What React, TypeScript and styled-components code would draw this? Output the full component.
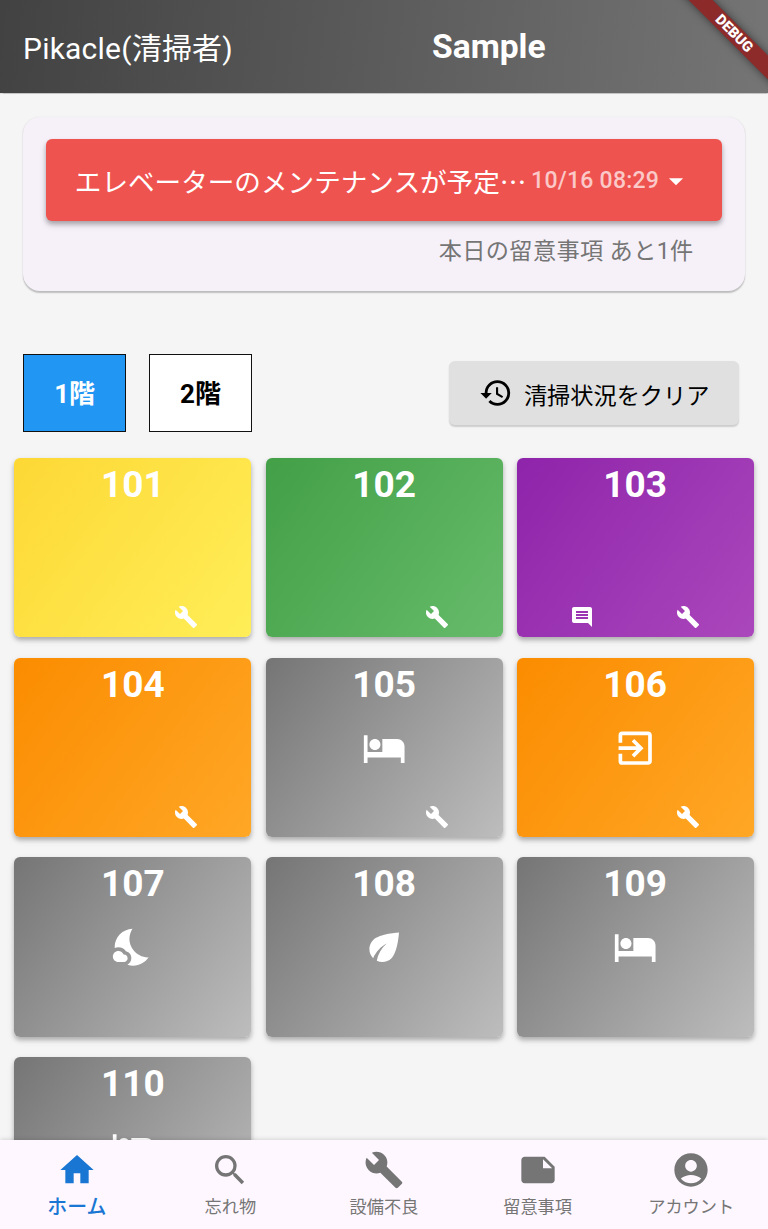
import React from 'react';
import styled, { createGlobalStyle, css } from 'styled-components';
import {
  MdAccountCircle,
  MdArrowDropDown,
  MdBuild,
  MdComment,
  MdEco,
  MdExitToApp,
  MdHistory,
  MdHome,
  MdHotel,
  MdNightsStay,
  MdNote,
  MdSearch,
} from 'react-icons/md';
import type { IconType } from 'react-icons';

const GlobalStyle = createGlobalStyle`
  *, *::before, *::after { box-sizing: border-box; }
  body {
    margin: 0;
    font-family: Roboto, "Noto Sans CJK JP", sans-serif;
    background: #f5f5f5;
  }
  button {
    font: inherit;
    border: 0;
    padding: 0;
    cursor: pointer;
  }
  svg { display: block; flex: none; }
`;

const Screen = styled.div`
  position: relative;
  display: flex;
  flex-direction: column;
  width: 768px;
  height: 1229px;
  overflow: hidden;
  background: #f5f5f5;
`;

const Header = styled.header`
  display: flex;
  align-items: center;
  flex: none;
  height: 93.3px;
  padding-left: 23px;
  color: #fff;
  background: linear-gradient(96.9deg, #424242, #757575);
  box-shadow: 0 0.5px 1px rgba(0, 0, 0, 0.2);
`;

const AppName = styled.div`
  width: 409px;
  padding-top: 4.4px;
  font-size: 30px;
  line-height: 40px;
  letter-spacing: 0.22px;
  white-space: nowrap;
`;

const FacilityName = styled.h1`
  margin: 0;
  font-size: 33.6px;
  line-height: 40px;
  font-weight: 700;
`;

const DebugRibbon = styled.div`
  position: absolute;
  top: 25px;
  left: 633.7px;
  width: 200px;
  height: 17.4px;
  transform: rotate(45deg);
  background: linear-gradient(rgba(183, 28, 28, 0.63), rgba(183, 28, 28, 0.63)), rgba(0, 0, 0, 0.4);
  box-shadow: 0 0 9px rgba(0, 0, 0, 0.5);
  color: #fff;
  font-size: 14.5px;
  line-height: 17.4px;
  font-weight: 900;
  text-align: center;
`;

const Content = styled.main`
  flex: 1;
  min-height: 0;
  overflow: hidden;
`;

const NoticePanel = styled.section`
  height: 174px;
  margin: 23.7px 22.8px 0;
  padding: 22.4px 23px 0;
  border-radius: 17px;
  background: #f6f1f9;
  box-shadow: 0 1.4px 1.5px rgba(0, 0, 0, 0.22), 0 0 2px rgba(0, 0, 0, 0.06);
`;

const NoticeButton = styled.button`
  display: flex;
  align-items: center;
  width: 100%;
  height: 81.3px;
  padding: 1px 29px 0 29px;
  border-radius: 6px;
  color: #fff;
  background: #ef5350;
  box-shadow: 0 3px 4px rgba(0, 0, 0, 0.22), 0 4px 7px rgba(0, 0, 0, 0.14);
`;

const NoticeText = styled.span`
  flex: 1;
  text-align: left;
  font-family: "Noto Sans CJK JP", sans-serif;
  font-size: 26.6px;
  line-height: 38px;
  white-space: nowrap;
`;

const NoticeDate = styled.span`
  color: rgba(255, 255, 255, 0.7);
  font-size: 23px;
  font-weight: 500;
  letter-spacing: 0.25px;
  white-space: nowrap;
`;

const NoticeRemaining = styled.p`
  margin: 13.5px 28.6px 0 0;
  color: #757575;
  font-size: 23.2px;
  line-height: 34px;
  letter-spacing: 0.35px;
  text-align: right;
`;

const Controls = styled.div`
  display: flex;
  align-items: center;
  margin-top: 63.1px;
  padding: 0 28.6px 0 23px;
  height: 78px;
`;

const FloorTab = styled.button<{ $active?: boolean }>`
  width: 103.3px;
  height: 78px;
  margin-right: 22.5px;
  padding-bottom: 3px;
  border: 1.4px solid #111;
  font-size: 26px;
  font-weight: 700;
  color: ${({ $active }) => ($active ? '#fff' : '#000')};
  background: ${({ $active }) => ($active ? '#2196f3' : '#fff')};
`;

const ClearButton = styled.button`
  display: flex;
  align-items: center;
  gap: 11.3px;
  width: 290px;
  height: 64px;
  margin-left: auto;
  padding-left: 29.2px;
  border-radius: 6px;
  font-size: 23.2px;
  color: #000;
  background: #e0e0e0;
  box-shadow: 0 1.5px 1.5px rgba(0, 0, 0, 0.16);
  white-space: nowrap;
`;

const ClearLabel = styled.span`
  padding-top: 2px;
`;

const RoomGrid = styled.div`
  display: grid;
  grid-template-columns: repeat(3, 237.05px);
  grid-auto-rows: 179.3px;
  gap: 20.3px 14.1px;
  padding: 26px 0 0 14.4px;
`;

const tones = {
  yellow: ['#fdd835', '#ffee58'],
  green: ['#43a047', '#66bb6a'],
  purple: ['#8e24aa', '#ab47bc'],
  orange: ['#fb8c00', '#ffa726'],
  grey: ['#757575', '#bdbdbd'],
};

type Tone = keyof typeof tones;

const RoomCard = styled.article<{ $tone: Tone }>`
  display: grid;
  grid-template-rows: 54px 1fr 53.2px;
  justify-items: center;
  align-items: center;
  border-radius: 6px;
  color: #fff;
  box-shadow: 0 3px 4px rgba(0, 0, 0, 0.2), 0 3px 7px rgba(0, 0, 0, 0.13);
  ${({ $tone }) => css`
    background: linear-gradient(127deg, ${tones[$tone][0]}, ${tones[$tone][1]});
  `}
`;

const RoomNumber = styled.h2`
  margin: 0;
  font-size: 37px;
  line-height: 54px;
  font-weight: 700;
`;

const RoomFlags = styled.div`
  display: grid;
  grid-template-columns: 106.6px 106.6px;
  justify-items: center;
  align-self: end;
  height: 32px;
`;

const BottomNav = styled.nav`
  position: relative;
  display: grid;
  grid-template-columns: repeat(5, 1fr);
  flex: none;
  height: 89.5px;
  background: #fef7ff;
  box-shadow: 0 0 5px rgba(0, 0, 0, 0.18);
`;

const NavItem = styled.button<{ $active?: boolean }>`
  display: flex;
  flex-direction: column;
  align-items: center;
  justify-content: flex-start;
  padding-top: 10.6px;
  background: none;
  color: ${({ $active }) => ($active ? '#1976d2' : '#757575')};
`;

const NavLabel = styled.span<{ $active?: boolean }>`
  margin-top: ${({ $active }) => ($active ? '4px' : '3px')};
  font-size: ${({ $active }) => ($active ? '19.9px' : '17.2px')};
  font-weight: ${({ $active }) => ($active ? 500 : 400)};
  line-height: 28px;
  white-space: nowrap;
`;

type Room = {
  number: string;
  tone: Tone;
  Status?: IconType;
  comment?: boolean;
  repair?: boolean;
};

const rooms: Room[] = [
  { number: '101', tone: 'yellow', repair: true },
  { number: '102', tone: 'green', repair: true },
  { number: '103', tone: 'purple', comment: true, repair: true },
  { number: '104', tone: 'orange', repair: true },
  { number: '105', tone: 'grey', Status: MdHotel, repair: true },
  { number: '106', tone: 'orange', Status: MdExitToApp, repair: true },
  { number: '107', tone: 'grey', Status: MdNightsStay },
  { number: '108', tone: 'grey', Status: MdEco },
  { number: '109', tone: 'grey', Status: MdHotel },
  { number: '110', tone: 'grey', Status: MdHotel },
];

const navItems: { label: string; Icon: IconType; active?: boolean }[] = [
  { label: 'ホーム', Icon: MdHome, active: true },
  { label: '忘れ物', Icon: MdSearch },
  { label: '設備不良', Icon: MdBuild },
  { label: '留意事項', Icon: MdNote },
  { label: 'アカウント', Icon: MdAccountCircle },
];

export default function App() {
  return (
    <Screen lang="ja">
      <GlobalStyle />
      <Header>
        <AppName>Pikacle(清掃者)</AppName>
        <FacilityName>Sample</FacilityName>
      </Header>
      <Content>
        <NoticePanel>
          <NoticeButton>
            <NoticeText>エレベーターのメンテナンスが予定…</NoticeText>
            <NoticeDate>10/16 08:29</NoticeDate>
            <MdArrowDropDown size={34} />
          </NoticeButton>
          <NoticeRemaining>本日の留意事項 あと1件</NoticeRemaining>
        </NoticePanel>
        <Controls>
          <FloorTab $active>1階</FloorTab>
          <FloorTab>2階</FloorTab>
          <ClearButton>
            <MdHistory size={34} />
            <ClearLabel>清掃状況をクリア</ClearLabel>
          </ClearButton>
        </Controls>
        <RoomGrid>
          {rooms.map(({ number, tone, Status, comment, repair }) => (
            <RoomCard key={number} $tone={tone}>
              <RoomNumber>{number}</RoomNumber>
              <div>{Status && <Status size={44.4} />}</div>
              <RoomFlags>
                <div>{comment && <MdComment size={24} />}</div>
                <div>{repair && <MdBuild size={24} />}</div>
              </RoomFlags>
            </RoomCard>
          ))}
        </RoomGrid>
      </Content>
      <BottomNav>
        {navItems.map(({ label, Icon, active }) => (
          <NavItem key={label} $active={active}>
            <Icon size={40} />
            <NavLabel $active={active}>{label}</NavLabel>
          </NavItem>
        ))}
      </BottomNav>
      <DebugRibbon>DEBUG</DebugRibbon>
    </Screen>
  );
}
